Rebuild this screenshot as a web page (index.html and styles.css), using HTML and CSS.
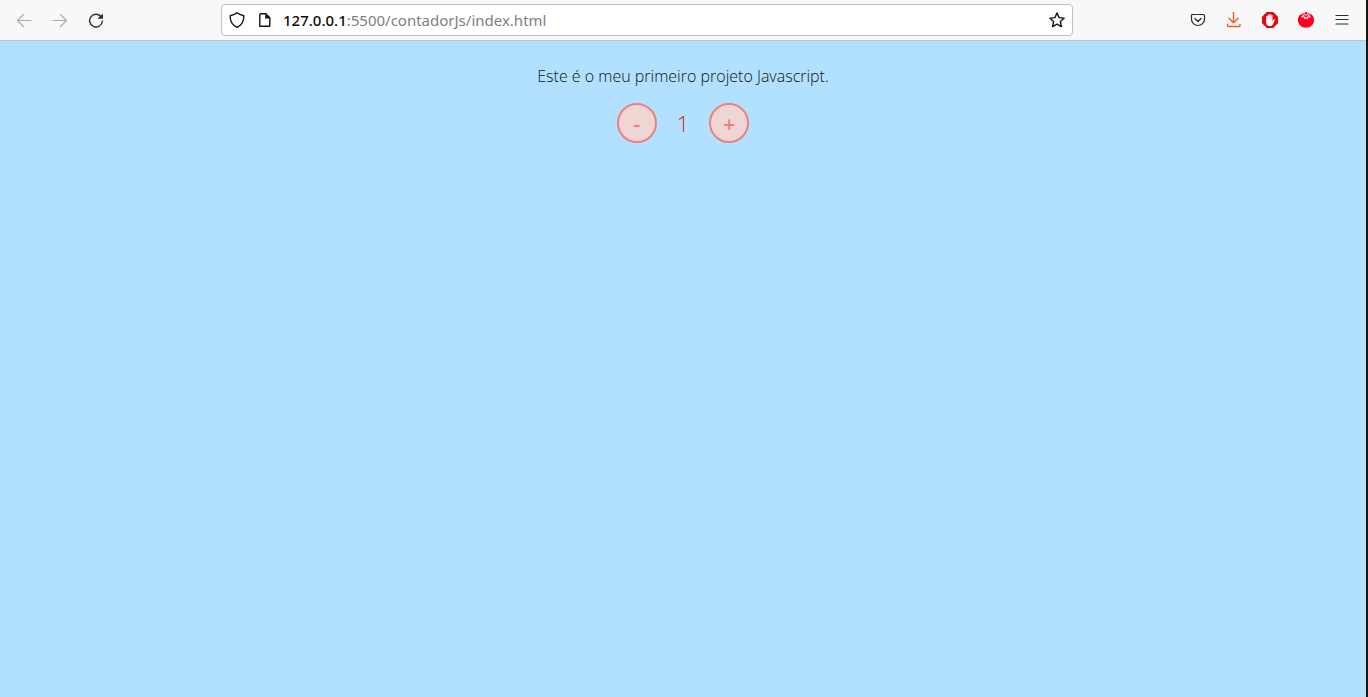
FILE: index.html
```html
<!DOCTYPE html>
<html lang="pt-BR">
<head>
<meta charset="utf-8">
<title>Contador</title>
<link rel="stylesheet" href="styles.css">
</head>
<body>
<div class="window">
  <header class="toolbar">
    <nav class="nav" aria-label="Navegação">
      <button class="tool tool-off" aria-label="Voltar" disabled><svg viewBox="0 0 16 16"><path d="M15 8.500H1.500M7.500 2.500l-6 6 6 6"/></svg></button>
      <button class="tool tool-off" aria-label="Avançar" disabled><svg viewBox="0 0 16 16"><path d="M1 8.500h13.500M8.500 2.500l6 6-6 6"/></svg></button>
      <button class="tool" aria-label="Recarregar"><svg viewBox="0 0 16 16"><path class="thick" d="M13.300 5A6.400 6.400 0 1 0 14.400 9"/><path class="fill" d="M15 1.500v5.200H9.500z"/></svg></button>
    </nav>
    <div class="address">
      <button class="inner" aria-label="Proteção"><svg viewBox="0 0 16 16"><path class="thick" d="M8 .8C10 2.500 12.500 3.200 14.800 3.800c.2 5-1.800 9.300-6.800 11.600C3 13.100 1 8.800 1.200 3.800 3.500 3.200 6 2.500 8 .8z"/></svg></button>
      <button class="inner" aria-label="Informações da página"><svg viewBox="0 0 16 16"><path class="thick" d="M3.500 1.700h5.300l4 4v8.600h-10V2.400z"/><path class="fill" d="M8.200 1.500v5h5z"/></svg></button>
      <div class="url" role="textbox" contenteditable="true" spellcheck="false" aria-label="Endereço"><span class="host">127.0.0.1</span>:5500/contadorJs/index.html</div>
      <button class="inner" aria-label="Favoritar"><svg viewBox="0 0 16 16"><path class="thick" d="M8 1l2.100 4.600 5 .6-3.700 3.400 1 5L8 12.100l-4.400 2.500 1-5L.9 6.200l5-.6z"/></svg></button>
    </div>
    <div class="extras">
      <button class="tool" aria-label="Pocket"><svg viewBox="0 0 16 16"><path d="M2.500 2.500h11q1 0 1 1v3.700a6.500 6.300 0 0 1-13 0V3.500q0-1 1-1z"/><path class="thick" d="M5 6.500l3 2.900 3-2.900"/></svg></button>
      <button class="tool tool-download" aria-label="Downloads"><svg viewBox="0 0 16 16"><path class="thick" d="M7.500.5v10M3 6.200l4.500 4.500L12 6.200M1.500 12.300v1.200q0 1 1 1h10.500q1 0 1-1v-1.200"/></svg></button>
      <button class="tool" aria-label="Bloqueador de anúncios"><svg viewBox="0 0 16 16"><path fill="#e00b10" stroke="none" d="M4.800 0h6.400L16 4.700v6.600L11.200 16H4.800L0 11.300V4.700z"/><path fill="#fff" stroke="none" d="M4.200 4.200q.6-.6 1.300 0V8h.2V3q.7-.8 1.500 0v4.400h.2V2.300q.7-.7 1.500 0v5.100h.2V3.200q.7-.7 1.400 0v6l1-1.700q.8-.7 1.400 0l-1.900 4.700q-.7 1.700-2.200 1.700H7q-2.500 0-2.800-2.800z"/></svg></button>
      <button class="tool" aria-label="Pomodoro"><svg viewBox="0 0 16 16"><path fill="#ff0024" stroke="none" d="M7.200 0h1.600l.3 1.200C13.500.8 16 4 16 8.200c0 4.300-3.400 7.500-8 7.500s-8-3.200-8-7.500C0 4 2.500.8 6.900 1.200z"/><path stroke="#fff" stroke-width=".9" d="M4 2.600l1.800 1L3.600 5l2.800-.3.200 2.400L8 5.200l1.400 1.900.2-2.400 2.800.3-2.200-1.400 1.800-1M6.200 2.400L8 3.200l1.800-.8"/></svg></button>
      <button class="tool" aria-label="Menu"><svg viewBox="0 0 16 16"><path d="M2 3.500h12M2 7.500h12M2 12h12"/></svg></button>
    </div>
  </header>
  <main class="page">
    <p class="intro">Este é o meu primeiro projeto Javascript.</p>
    <div class="counter">
      <button class="step" aria-label="Diminuir">-</button>
      <output class="value">1</output>
      <button class="step" aria-label="Aumentar">+</button>
    </div>
  </main>
</div>
</body>
</html>
```
FILE: styles.css
```css
* { box-sizing: border-box; }

body {
  margin: 0;
  background: #15130f;
  font-family: "Open Sans", sans-serif;
}

.window {
  display: flex;
  flex-direction: column;
  min-height: 100vh;
  margin-right: 2px;
  background: #b2e1ff;
}

button {
  padding: 0;
  border: 0;
  background: none;
  font: inherit;
}

.toolbar {
  display: flex;
  align-items: center;
  justify-content: space-between;
  height: 41px;
  padding: 0 16px;
  border-bottom: 1px solid #c4c4c6;
  background: #f8f8f8;
}

.nav,
.extras {
  display: flex;
  gap: 20px;
}

.nav { width: 205px; }

.extras {
  justify-content: flex-end;
  width: 277px;
}

.tool,
.inner {
  display: flex;
  flex: none;
  width: 16px;
  height: 16px;
  color: #2d2d31;
}

.tool-off { color: #ababab; }
.tool-download { color: #f05a28; }

svg {
  width: 16px;
  height: 16px;
  fill: none;
  stroke: currentColor;
  stroke-width: 1.2;
  stroke-linejoin: round;
  stroke-linecap: round;
}

.thick { stroke-width: 1.4; }

.fill {
  fill: currentColor;
  stroke: none;
}

.address {
  display: flex;
  flex: 1;
  align-items: center;
  gap: 10px;
  height: 32px;
  padding: 0 7px;
  border: 1px solid #bfbfc1;
  border-radius: 4px;
  background: #fff;
}

.inner { color: #151519; }

.inner:first-child { margin-right: 2px; }

.url {
  flex: 1;
  color: #808080;
  font-family: "Noto Sans", sans-serif;
  font-size: 15px;
  line-height: 20px;
  white-space: nowrap;
}

.host {
  color: #0c0c0d;
  font-weight: 500;
}

.page {
  display: flex;
  flex: 1;
  flex-direction: column;
  align-items: center;
  gap: 16px;
  padding-top: 24px;
}

.intro {
  margin: 0;
  color: #111;
  font-size: 16px;
  font-weight: 300;
  line-height: 22px;
}

.counter {
  display: flex;
  align-items: center;
  gap: 20px;
}

.step {
  width: 40px;
  height: 40px;
  border: 2px solid #f08080;
  border-radius: 50%;
  background: #f0d5d5;
  color: #f08080;
  font-size: 22px;
  font-weight: 600;
  line-height: 28px;
}

.value {
  color: #dc2626;
  font-size: 22px;
  font-weight: 300;
  line-height: 30px;
}
```
